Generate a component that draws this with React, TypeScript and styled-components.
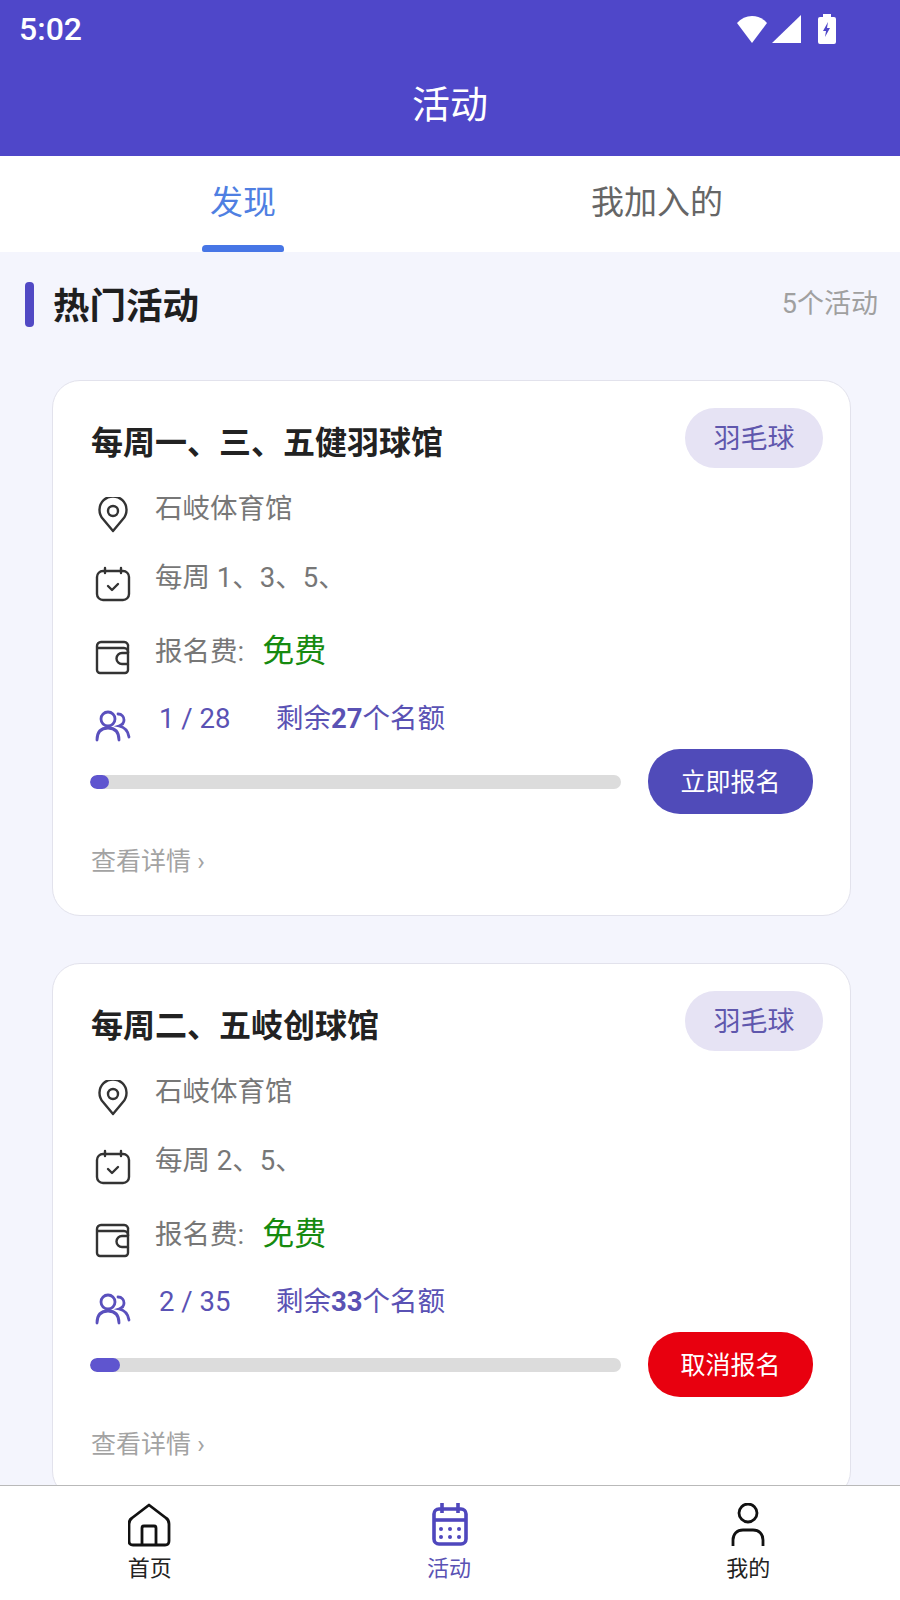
import React from 'react';
import styled, { createGlobalStyle } from 'styled-components';

const GlobalStyle = createGlobalStyle`
    html,
    body {
        margin: 0;
        padding: 0;
        background: #f4f5fd;
    }

    body {
        font-family: Roboto, "Noto Sans CJK SC", sans-serif;
    }
`;

const Page = styled.div`
    display: flex;
    flex-direction: column;
    width: 900px;
    height: 1600px;
    overflow: hidden;
`;

const Header = styled.header`
    flex: none;
    height: 156px;
    background: #4f47c9;
    color: #ffffff;
`;

const StatusBar = styled.div`
    display: flex;
    align-items: center;
    justify-content: space-between;
    height: 57px;
    padding: 0 64px 0 19px;
`;

const Clock = styled.span`
    font-size: 32px;
    font-weight: 500;
`;

const StatusIcons = styled.div`
    display: flex;
    align-items: center;
    gap: 5px;
`;

const PageTitle = styled.h1`
    margin: 11px 0 0;
    text-align: center;
    font-size: 38px;
    line-height: 74px;
    font-weight: 400;
`;

const Tabs = styled.nav`
    flex: none;
    display: flex;
    height: 96px;
    padding: 0 36px;
    background: #ffffff;
`;

const Tab = styled.div<{ $active?: boolean }>`
    position: relative;
    flex: 1;
    padding-top: 23px;
    text-align: center;
    font-size: 33px;
    line-height: 48px;
    color: ${({ $active }) => ($active ? '#4f7fe2' : '#666666')};

    ${({ $active }) =>
        $active &&
        `&::after {
            content: '';
            position: absolute;
            left: 166px;
            bottom: 0;
            width: 82px;
            height: 7px;
            border-radius: 4px 4px 2px 2px;
            background: #4776e6;
        }`}
`;

const Content = styled.main`
    flex: 1;
    min-height: 0;
    overflow: hidden;
    background: #f4f5fd;
`;

const SectionHead = styled.div`
    display: flex;
    align-items: center;
    height: 45px;
    margin: 30px 22px 53px 25px;
`;

const SectionMark = styled.span`
    width: 9px;
    height: 45px;
    border-radius: 4px;
    background: #5149c4;
`;

const SectionTitle = styled.h2`
    flex: 1;
    margin: 4px 0 0 19px;
    font-size: 36.5px;
    line-height: 48px;
    font-weight: 700;
    color: #1f1f1f;
`;

const SectionCount = styled.span`
    font-size: 27px;
    color: #a0a0a0;
    position: relative;
    top: -3px;
`;

const CardList = styled.div`
    display: flex;
    flex-direction: column;
    gap: 47px;
    padding: 0 49px 0 52px;
`;

const Card = styled.article`
    flex: none;
    box-sizing: border-box;
    height: 536px;
    padding: 27px 37px 0 37px;
    border: 1px solid #e2e2ec;
    border-radius: 28px;
    background: #ffffff;
`;

const CardHead = styled.div`
    display: flex;
    justify-content: space-between;
    height: 83px;
    margin-right: -10px;
`;

const CardTitle = styled.h3`
    margin: 11px 0 0 1px;
    font-size: 32px;
    line-height: 48px;
    font-weight: 700;
    color: #222222;
`;

const Tag = styled.span`
    width: 138px;
    height: 60px;
    border-radius: 30px;
    background: #e6e3f4;
    color: #5f57ad;
    font-size: 27px;
    line-height: 62px;
    text-align: center;
`;

const InfoRow = styled.div<{ $height: number }>`
    display: flex;
    height: ${({ $height }) => $height}px;
`;

const InfoIcon = styled.span`
    flex: none;
    display: flex;
    justify-content: center;
    width: 46px;
    margin-right: 19px;
    padding-top: 6px;
    color: #333333;
`;

const InfoText = styled.span`
    font-size: 27.5px;
    line-height: 36px;
    color: #777777;
`;

const FeeValue = styled.span`
    margin-left: 18px;
    font-size: 32px;
    vertical-align: -1px;
    color: #168a0f;
`;

const QuotaRow = styled(InfoRow)`
    ${InfoIcon} {
        color: #5a50bd;
        padding-top: 9px;
    }
`;

const QuotaText = styled.span`
    font-size: 27.5px;
    line-height: 36px;
    color: #5a52b4;

    strong {
        font-weight: 700;
    }
`;

const QuotaCount = styled(QuotaText)`
    width: 117px;
    padding-left: 4px;
`;

const ProgressRow = styled.div`
    display: flex;
    align-items: center;
    justify-content: space-between;
    height: 65px;
`;

const ProgressTrack = styled.div`
    width: 531px;
    height: 14px;
    border-radius: 7px;
    background: #dcdcdc;
    overflow: hidden;
`;

const ProgressFill = styled.div`
    height: 100%;
    border-radius: 7px;
    background: #5f55cf;
`;

const SignButton = styled.button<{ $cancel?: boolean }>`
    width: 165px;
    height: 65px;
    padding: 0 0 4px;
    border: 0;
    border-radius: 32px;
    background: ${({ $cancel }) => ($cancel ? '#e8000f' : '#504bb9')};
    color: #ffffff;
    font-family: inherit;
    font-size: 25px;
`;

const DetailLink = styled.a`
    display: block;
    margin: 30px 0 0 1px;
    font-size: 25px;
    line-height: 36px;
    color: #a3a3a3;
`;

const BottomNav = styled.nav`
    flex: none;
    box-sizing: border-box;
    display: flex;
    height: 115px;
    padding: 17px 2px 0 0;
    border-top: 1px solid #b9b9b9;
    background: #ffffff;
`;

const NavItem = styled.div<{ $active?: boolean }>`
    flex: 1;
    display: flex;
    flex-direction: column;
    align-items: center;
    color: ${({ $active }) => ($active ? '#4f47bd' : '#111111')};
`;

const NavIcon = styled.span`
    display: flex;
    height: 46px;
`;

const NavLabel = styled.span<{ $active?: boolean }>`
    margin-top: 3px;
    font-size: 22px;
    line-height: 34px;
    color: ${({ $active }) => ($active ? '#5a52b4' : '#222222')};
`;

const PinIcon = () => (
    <svg width="30" height="36" viewBox="0 0 30 36" fill="none" stroke="currentColor" strokeWidth="2.4">
        <path d="M15 34 L5 22 A13.5 13.5 0 1 1 25 22 Z" strokeLinejoin="round" />
        <circle cx="15" cy="14" r="5" />
    </svg>
);

const CalendarCheckIcon = () => (
    <svg width="36" height="36" viewBox="0 0 36 36" fill="none" stroke="currentColor" strokeWidth="2.4" strokeLinecap="round" strokeLinejoin="round">
        <rect x="2" y="5" width="32" height="29" rx="6" />
        <path d="M10 2v5M26 2v5M13 20l4 4 6-6" />
    </svg>
);

const WalletIcon = () => (
    <svg width="36" height="36" viewBox="0 0 36 36" fill="none" stroke="currentColor" strokeWidth="2.4" strokeLinejoin="round">
        <path d="M33 14V8a4 4 0 0 0-4-5H6a4 4 0 0 0-4 4v24a3 3 0 0 0 3 3h25a3 3 0 0 0 3-3v-6" />
        <path d="M2 9h27a4 4 0 0 1 4 4v12h-6a5.500 5.500 0 0 1 0-11h6" />
    </svg>
);

const UsersIcon = () => (
    <svg width="36" height="32" viewBox="0 0 36 32" fill="none" stroke="currentColor" strokeWidth="2.8" strokeLinecap="round">
        <circle cx="13" cy="9" r="7" />
        <path d="M2 30c0-8 4-12 11-12s11 4 11 12" />
        <path d="M23 4c4 0 6 3 6 6s-2 5-5 6c5 1 9 4 10 11" />
    </svg>
);

const HomeIcon = () => (
    <svg width="44" height="44" viewBox="1 0 44 44" fill="none" stroke="currentColor" strokeWidth="2.8" strokeLinejoin="round">
        <path d="M22 2 L39 15 Q42 17 42 21 V38 Q42 42 38 42 H6 Q2 42 2 38 V21 Q2 17 5 15 Z" />
        <path d="M15 42 V25 Q15 23 17 23 H27 Q29 23 29 25 V42" />
    </svg>
);

const CalendarOutlineIcon = () => (
    <svg width="38" height="44" viewBox="-1 0 38 44" fill="none" stroke="currentColor" strokeWidth="3.6">
        <rect x="3" y="6" width="32" height="35" rx="5" />
        <path d="M3 17H35" />
        <path d="M11 0V10M27 0V10" />
        {[10, 19, 28].map((x) =>
            [26, 34].map((y) => <circle key={`${x}-${y}`} cx={x} cy={y} r="2" fill="currentColor" stroke="none" />)
        )}
    </svg>
);

const UserIcon = () => (
    <svg width="36" height="44" viewBox="0 0 36 44" fill="none" stroke="currentColor" strokeWidth="2.8">
        <circle cx="18" cy="10" r="9" />
        <path d="M3 43V37C3 31 7 27 13 27H23C29 27 33 31 33 37V43" />
    </svg>
);

interface Activity {
    title: string;
    tag: string;
    venue: string;
    schedule: string;
    joined: number;
    capacity: number;
    signedUp?: boolean;
}

const activities: Activity[] = [
    { title: '每周一、三、五健羽球馆', tag: '羽毛球', venue: '石岐体育馆', schedule: '每周 1、3、5、', joined: 1, capacity: 28 },
    { title: '每周二、五岐创球馆', tag: '羽毛球', venue: '石岐体育馆', schedule: '每周 2、5、', joined: 2, capacity: 35, signedUp: true }
];

const ActivityCard: React.FC<{ activity: Activity }> = ({ activity }) => (
    <Card>
        <CardHead>
            <CardTitle>{activity.title}</CardTitle>
            <Tag>{activity.tag}</Tag>
        </CardHead>
        <InfoRow $height={69}>
            <InfoIcon>
                <PinIcon />
            </InfoIcon>
            <InfoText>{activity.venue}</InfoText>
        </InfoRow>
        <InfoRow $height={73}>
            <InfoIcon>
                <CalendarCheckIcon />
            </InfoIcon>
            <InfoText>{activity.schedule}</InfoText>
        </InfoRow>
        <InfoRow $height={68}>
            <InfoIcon>
                <WalletIcon />
            </InfoIcon>
            <InfoText>
                报名费:
                <FeeValue>免费</FeeValue>
            </InfoText>
        </InfoRow>
        <QuotaRow $height={48}>
            <InfoIcon>
                <UsersIcon />
            </InfoIcon>
            <QuotaCount>
                {activity.joined} / {activity.capacity}
            </QuotaCount>
            <QuotaText>
                剩余<strong>{activity.capacity - activity.joined}</strong>个名额
            </QuotaText>
        </QuotaRow>
        <ProgressRow>
            <ProgressTrack>
                <ProgressFill style={{ width: `${(activity.joined / activity.capacity) * 100}%` }} />
            </ProgressTrack>
            <SignButton $cancel={activity.signedUp}>{activity.signedUp ? '取消报名' : '立即报名'}</SignButton>
        </ProgressRow>
        <DetailLink>查看详情 ›</DetailLink>
    </Card>
);

export default function App() {
    return (
        <Page>
            <GlobalStyle />
            <Header>
                <StatusBar>
                    <Clock>5:02</Clock>
                    <StatusIcons>
                        <svg width="30" height="28" viewBox="0 0 33 28" preserveAspectRatio="none">
                            <path fill="#fff" d="M16.500 28 L0 8 Q7 1 16.500 1 Q26 1 33 8 Z" />
                        </svg>
                        <svg width="29" height="28" viewBox="0 0 29 28">
                            <path fill="#fff" d="M29 0V28H0Z" />
                        </svg>
                        <svg width="18" height="30" viewBox="0 0 18 30" style={{ marginLeft: 12 }}>
                            <path
                                fill="#fff"
                                fillRule="evenodd"
                                d="M5 0h8v3h3a2 2 0 0 1 2 2v23a2 2 0 0 1-2 2H2a2 2 0 0 1-2-2V5a2 2 0 0 1 2-2h3zM10 8L5 17h3l-1 6 5-9H9z"
                            />
                        </svg>
                    </StatusIcons>
                </StatusBar>
                <PageTitle>活动</PageTitle>
            </Header>
            <Tabs>
                <Tab $active>发现</Tab>
                <Tab>我加入的</Tab>
            </Tabs>
            <Content>
                <SectionHead>
                    <SectionMark />
                    <SectionTitle>热门活动</SectionTitle>
                    <SectionCount>5个活动</SectionCount>
                </SectionHead>
                <CardList>
                    {activities.map((activity) => (
                        <ActivityCard key={activity.title} activity={activity} />
                    ))}
                </CardList>
            </Content>
            <BottomNav>
                <NavItem>
                    <NavIcon>
                        <HomeIcon />
                    </NavIcon>
                    <NavLabel>首页</NavLabel>
                </NavItem>
                <NavItem $active>
                    <NavIcon>
                        <CalendarOutlineIcon />
                    </NavIcon>
                    <NavLabel $active>活动</NavLabel>
                </NavItem>
                <NavItem>
                    <NavIcon>
                        <UserIcon />
                    </NavIcon>
                    <NavLabel>我的</NavLabel>
                </NavItem>
            </BottomNav>
        </Page>
    );
}
